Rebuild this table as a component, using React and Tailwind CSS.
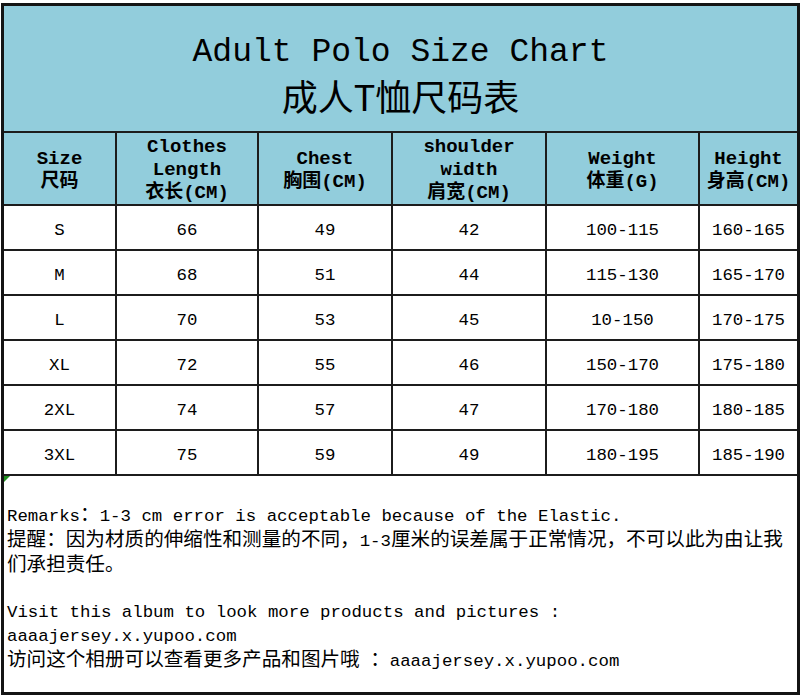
import React from 'react';

const mono = { fontFamily: '"Liberation Mono", "Noto Sans CJK SC", monospace' };

const headers = [
  ['Size', '尺码'],
  ['Clothes', 'Length', '衣长(CM)'],
  ['Chest', '胸围(CM)'],
  ['shoulder', 'width', '肩宽(CM)'],
  ['Weight', '体重(G)'],
  ['Height', '身高(CM)'],
];

const rows = [
  ['S', '66', '49', '42', '100-115', '160-165'],
  ['M', '68', '51', '44', '115-130', '165-170'],
  ['L', '70', '53', '45', '10-150', '170-175'],
  ['XL', '72', '55', '46', '150-170', '175-180'],
  ['2XL', '74', '57', '47', '170-180', '180-185'],
  ['3XL', '75', '59', '49', '180-195', '185-190'],
];

function Cjk({ children }) {
  return <span className="text-[19.6px]">{children}</span>;
}

export default function App() {
  return (
    <div className="w-[800px] h-[698px] bg-white pt-[3px] pl-[1px]" style={mono}>
      <div className="w-[799px] h-[692px] border-[3px] border-[#141414] bg-[#1c1c1c]">
        <div className="grid grid-cols-[111px_140px_132px_152px_151px_97px] grid-rows-[125px_71px_repeat(6,43px)_216px] gap-[2px] text-black">
          <div className="col-span-6 bg-[#92CDDC] flex flex-col items-center pt-[27px]">
            <div className="text-[33px] leading-[40px] h-[40px]">Adult Polo Size Chart</div>
            <div
              className="text-[36px] leading-[44px]"
              style={{ fontFamily: '"Noto Sans CJK SC", sans-serif' }}
            >
              成人T恤尺码表
            </div>
          </div>

          {headers.map((h, i) => (
            <div key={i} className="bg-[#92CDDC] flex flex-col items-center justify-center pt-[4px] font-bold text-[19px] leading-[23px]">
              {h.map((line, j) => (
                <div key={j}>{line}</div>
              ))}
            </div>
          ))}

          {rows.map((r, i) =>
            r.map((c, j) => (
              <div key={i + '-' + j} className="bg-white flex items-center justify-center pt-[7px] text-[17.4px]">
                {c}
              </div>
            ))
          )}

          <div className="col-span-6 bg-white relative pt-[28px] pl-[3px] text-[17.4px] leading-[24px] whitespace-nowrap">
            <div className="absolute top-0 left-0 w-0 h-0 border-t-[6px] border-t-[#1f8f1f] border-r-[6px] border-r-transparent" />
            <div>Remarks<Cjk>：</Cjk>1-3 cm error is acceptable because of the Elastic.</div>
            <div><Cjk>提醒：因为材质的伸缩性和测量的不同，</Cjk>1-3<Cjk>厘米的误差属于正常情况，不可以此为由让我</Cjk></div>
            <div><Cjk>们承担责任。</Cjk></div>
            <div className="h-[22px]" />
            <div>Visit this album to look more products and pictures :</div>
            <div>aaaajersey.x.yupoo.com</div>
            <div><Cjk>访问这个相册可以查看更多产品和图片哦</Cjk> <Cjk>：</Cjk>aaaajersey.x.yupoo.com</div>
          </div>
        </div>
      </div>
    </div>
  );
}
